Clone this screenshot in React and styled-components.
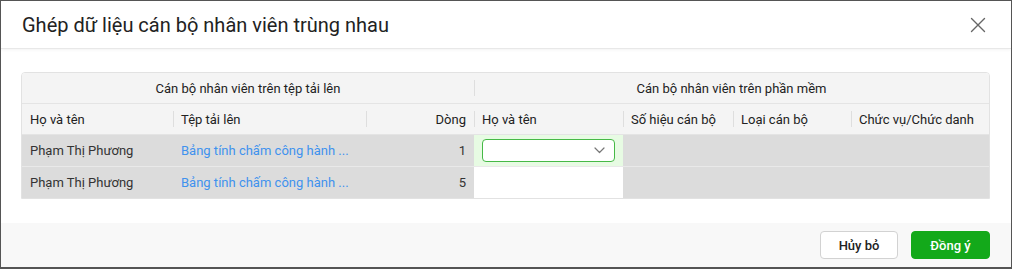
import React from "react";
import styled, { createGlobalStyle } from "styled-components";

const GlobalStyle = createGlobalStyle`
  html, body {
    margin: 0;
    padding: 0;
    background: #ffffff;
  }
  body {
    font-family: Roboto, "Noto Sans", "Liberation Sans", sans-serif;
    color: #333;
  }
`;

const leftCols = [
  { key: "name", label: "Họ và tên", width: 151 },
  { key: "file", label: "Tệp tải lên", width: 193 },
  { key: "line", label: "Dòng", width: 108, align: "right" },
];

const rightCols = [
  { key: "staff", label: "Họ và tên", width: 149 },
  { key: "code", label: "Số hiệu cán bộ", width: 110 },
  { key: "type", label: "Loại cán bộ", width: 118 },
  { key: "title", label: "Chức vụ/Chức danh", width: 138 },
];

const rows = [
  { name: "Phạm Thị Phương", file: "Bảng tính chấm công hành ...", line: 1, active: true },
  { name: "Phạm Thị Phương", file: "Bảng tính chấm công hành ...", line: 5 },
];

const CloseIcon = () => (
  <svg width="16" height="16" viewBox="0 0 16 16" fill="none">
    <path d="M1.5 1.5L14.5 14.5M14.5 1.5L1.5 14.5" stroke="#666" strokeWidth="1.4" strokeLinecap="round" />
  </svg>
);

const Chevron = () => (
  <svg width="11" height="7" viewBox="0 0 11 7" fill="none">
    <path d="M1 1l4.5 4.5L10 1" stroke="#777" strokeWidth="1.2" strokeLinecap="round" strokeLinejoin="round" />
  </svg>
);

const App = () => {
  return (
    <>
      <GlobalStyle />
      <Dialog>
        <Header>
          <Title>Ghép dữ liệu cán bộ nhân viên trùng nhau</Title>
          <CloseButton aria-label="Đóng">
            <CloseIcon />
          </CloseButton>
        </Header>
        <Body>
          <Table>
            <colgroup>
              {[...leftCols, ...rightCols].map((c) => (
                <col key={c.key} style={{ width: c.width }} />
              ))}
            </colgroup>
            <thead>
              <tr>
                <GroupTh colSpan={3}>Cán bộ nhân viên trên tệp tải lên</GroupTh>
                <GroupTh colSpan={4} $divider>
                  Cán bộ nhân viên trên phần mềm
                </GroupTh>
              </tr>
              <tr>
                {[...leftCols, ...rightCols].map((c, i) => (
                  <ColTh key={c.key} $align={c.align} $divider={i > 0}>
                    {c.label}
                  </ColTh>
                ))}
              </tr>
            </thead>
            <tbody>
              {rows.map((r, i) => (
                <Row key={i}>
                  <Td>{r.name}</Td>
                  <Td>
                    <FileLink href="#">{r.file}</FileLink>
                  </Td>
                  <Td $align="right">{r.line}</Td>
                  <PickCell $active={r.active}>
                    {r.active && (
                      <Select>
                        <Chevron />
                      </Select>
                    )}
                  </PickCell>
                  <Td />
                  <Td />
                  <Td />
                </Row>
              ))}
            </tbody>
          </Table>
        </Body>
        <Footer>
          <Button $w={78}>Hủy bỏ</Button>
          <Button $w={79} $primary>
            Đồng ý
          </Button>
        </Footer>
      </Dialog>
    </>
  );
};

const Dialog = styled.div`
  width: 1012px;
  height: 269px;
  box-sizing: border-box;
  border: 1px solid #555;
  border-bottom-width: 2px;
  background: #fff;
  display: flex;
  flex-direction: column;
  overflow: hidden;
`;

const Header = styled.header`
  height: 48px;
  box-sizing: border-box;
  flex-shrink: 0;
  display: flex;
  align-items: center;
  justify-content: space-between;
  padding: 0 21px 0 21px;
  border-bottom: 1px solid #e8e8e8;
  box-shadow: 0 1px 3px rgba(0, 0, 0, 0.05);
  position: relative;
  z-index: 1;
`;

const Title = styled.h1`
  margin: 0;
  font-size: 20px;
  font-weight: 400;
  color: #222;
`;

const CloseButton = styled.button`
  border: 0;
  background: none;
  padding: 4px;
  display: flex;
  cursor: pointer;
`;

const Body = styled.main`
  flex: 1;
  padding: 23px 20px 0 20px;
`;

const Table = styled.table`
  width: 969px;
  table-layout: fixed;
  border-collapse: separate;
  border-spacing: 0;
  border: 1px solid #e2e2e2;
  border-radius: 4px 4px 0 0;
  overflow: hidden;
  font-size: 13px;
`;

const Th = styled.th`
  position: relative;
  height: 30px;
  padding: 0 8px;
  background: #f4f4f4;
  font-weight: 400;
  color: #222;
  border-bottom: 1px solid #e4e4e4;
  white-space: nowrap;

  &::before {
    content: "";
    display: ${(p) => (p.$divider ? "block" : "none")};
    position: absolute;
    left: 0;
    top: 7px;
    bottom: 7px;
    width: 1px;
    background: #dedede;
  }
`;

const GroupTh = styled(Th)`
  text-align: center;
`;

const ColTh = styled(Th)`
  text-align: ${(p) => p.$align || "left"};
`;

const Row = styled.tr`
  &:last-child td {
    border-bottom: 0;
  }
`;

const Td = styled.td`
  height: 31px;
  padding: 0 8px;
  background: #dcdcdc;
  color: #333;
  border-bottom: 1px solid #e9e9e9;
  text-align: ${(p) => p.$align || "left"};
  white-space: nowrap;
  overflow: hidden;
`;

const PickCell = styled(Td)`
  background: ${(p) => (p.$active ? "#e7fbe3" : "#ffffff")};
  padding: 0 8px 0 8px;
`;

const Select = styled.div`
  height: 23px;
  box-sizing: border-box;
  border: 1px solid #46b946;
  border-radius: 4px;
  background: #fff;
  display: flex;
  align-items: center;
  justify-content: flex-end;
  padding-right: 9px;
`;

const FileLink = styled.a`
  color: #3f92ee;
  text-decoration: none;
`;

const Footer = styled.footer`
  height: 44px;
  margin-top: auto;
  background: #f8f8f8;
  display: flex;
  align-items: center;
  justify-content: flex-end;
  gap: 13px;
  padding: 0 21px 0 0;
`;

const Button = styled.button`
  height: 28px;
  width: ${(p) => p.$w}px;
  padding: 0;
  border-radius: 4px;
  font-family: Roboto, "Noto Sans", "Liberation Sans", sans-serif;
  font-size: 13px;
  font-weight: 500;
  cursor: pointer;
  border: 1px solid ${(p) => (p.$primary ? "#13a91a" : "#d2d2d2")};
  background: ${(p) => (p.$primary ? "#13a91a" : "#ffffff")};
  color: ${(p) => (p.$primary ? "#ffffff" : "#222")};
`;

export default App;
